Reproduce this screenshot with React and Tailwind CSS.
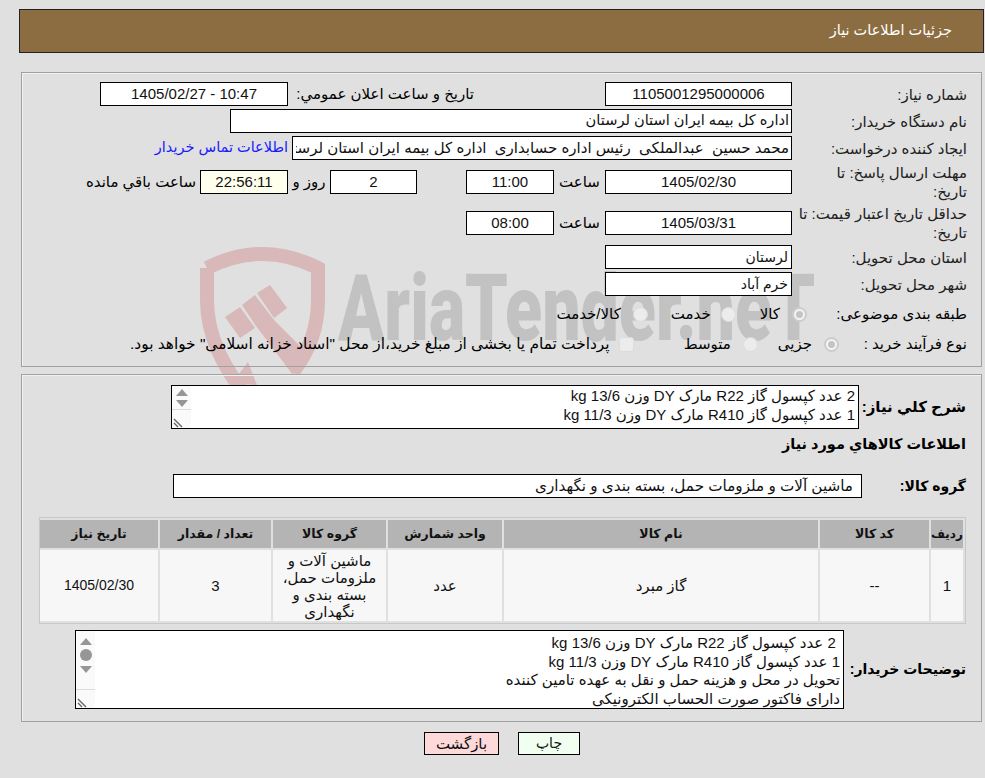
import React from 'react';

const font = "[font-family:'Liberation_Sans','DejaVu_Sans',sans-serif]";

const Box = ({ className = '', children }) => (
  <div className={`h-[24px] border border-black bg-white flex items-center justify-center shrink-0 text-[15px] text-[#111] overflow-hidden whitespace-pre ${className}`}>
    {children}
  </div>
);

const Label = ({ children }) => (
  <div className="w-[175px] shrink-0 text-[15px] leading-[19px] text-[#222]">{children}</div>
);

const Radio = ({ checked, className = '' }) => (
  <span className={`w-[15px] h-[15px] rounded-full flex items-center justify-center shrink-0 ${checked ? 'bg-[#f4f4f4] border-2 border-[#cccccc]' : 'bg-[#ececec] border border-[#dcdcdc]'} ${className}`}>
    {checked && <span className="w-[7px] h-[7px] rounded-full bg-[#c4c4c4]" />}
  </span>
);

const Scroller = ({ thumb }) => (
  <div className="absolute left-0 top-0 bottom-0 w-[19px] bg-[#fafafa] flex flex-col items-center">
    <svg width="12" height="8" viewBox="0 0 12 8" className={thumb ? 'mt-[7px]' : 'mt-[3px]'}><path d="M0 7 L6 0 L12 7 Z" fill="#969696" /></svg>
    {thumb && <span className="w-[12px] h-[12px] rounded-full bg-[#969696] mt-[3px]" />}
    <svg width="12" height="8" viewBox="0 0 12 8" className={thumb ? 'mt-[5px]' : 'mt-[3px]'}><path d="M0 0 L12 0 L6 7 Z" fill="#969696" /></svg>
    <div className="mt-auto w-full h-[19px] border-t border-[#dcdcdc] relative">
      <svg width="10" height="10" viewBox="0 0 10 10" className="absolute left-[1px] bottom-0"><path d="M1 1 L9 9 M1 5 L5 9" stroke="#666" strokeWidth="1.4" fill="none" /></svg>
    </div>
  </div>
);

const columns = [
  { title: 'ردیف', width: 'w-[32px] text-[12px]' },
  { title: 'کد کالا', width: 'w-[109px] text-[12.5px]' },
  { title: 'نام کالا', width: 'w-[314px] text-[12.5px]' },
  { title: 'واحد شمارش', width: 'w-[114px] text-[12.5px]' },
  { title: 'گروه کالا', width: 'w-[113px] text-[12.5px]' },
  { title: 'تعداد / مقدار', width: 'w-[111px] text-[12.5px]' },
  { title: 'تاریخ نیاز', width: 'w-[118px] text-[12.5px]' },
];

const row = ['1', '--', 'گاز مبرد', 'عدد', 'ماشین آلات و ملزومات حمل، بسته بندی و نگهداری', '3', '1405/02/30'];

export default function App() {
  return (
    <div dir="rtl" className={`relative min-h-[778px] w-[985px] overflow-hidden bg-[#e0e0e0] pt-[9px] ${font}`}>
      {/* واترمارک */}
      <div dir="ltr" className="absolute left-[190px] top-[240px] w-[640px] h-[200px]">
        <svg width="160" height="200" viewBox="190 240 160 200" className="absolute left-0 top-0">
          <g fill="none" stroke="#d8b8b8" strokeWidth="14">
            <path d="M207 268 Q262 240 318 268 L318 300 Q318 340 293 372" />
            <path d="M207 268 L207 300 Q207 350 250 400" />
          </g>
          <g fill="#d8b8b8">
            <path d="M225 317 L240 307 L255 328 L240 338 Z" />
            <path d="M242 305 L255 295 L274 320 L306 352 L293 375 L256 326 Z" />
            <path d="M257 293 L270 285 L287 308 L274 318 Z" />
            <path d="M248 362 L257 385 L232 383 Z" />
          </g>
        </svg>
        <span className="absolute left-[148px] top-[19px] origin-left scale-x-[0.74] text-[92px] leading-[100px] font-black text-[#c2c2c2] whitespace-nowrap [font-family:'Roboto',sans-serif]">
          AriaTender.neT
        </span>
      </div>

      <div className="relative z-10">
        {/* هدر */}
        <div className="mr-[1px] ml-[19px] h-[44px] border border-[#222] bg-[#8c6d42] flex items-center pr-[31px] text-[14.5px] text-white">
          جزئیات اطلاعات نیاز
        </div>

        {/* مشخصات نیاز */}
        <div className="mt-[19px] mr-[3px] ml-[21px] h-[295px] border border-[#a0a0a0] shadow-[inset_1px_1px_0_#f2f2f2] pt-[9px] pr-[14px]">
          <div className="flex items-center h-[24px]">
            <Label>شماره نیاز:</Label>
            <Box className="w-[187px]">1105001295000006</Box>
            <div className="mr-[131px] w-[186px] text-[15px] whitespace-nowrap">تاریخ و ساعت اعلان عمومي:</div>
            <Box className="w-[188px]"><span dir="ltr">1405/02/27 - 10:47</span></Box>
          </div>
          <div className="flex items-center h-[24px] mt-[3px]">
            <Label>نام دستگاه خریدار:</Label>
            <Box className="w-[562px] !justify-start pr-[2px] !text-[14.6px]">اداره کل بیمه ایران استان لرستان</Box>
          </div>
          <div className="flex items-center h-[24px] mt-[3px]">
            <Label>ایجاد کننده درخواست:</Label>
            <Box className="w-[500px] !justify-start pr-[2px] pl-[3px]">
              <div className="overflow-hidden">محمد حسین  عبدالملکی  رئیس اداره حسابداری  اداره کل بیمه ایران استان لرستان</div>
            </Box>
            <a href="#" className="mr-[4px] text-[14.5px] text-[#1a1aff] whitespace-nowrap">اطلاعات تماس خریدار</a>
          </div>
          <div className="flex items-center h-[24px] mt-[10px]">
            <Label>مهلت ارسال پاسخ: تا<br />تاریخ:</Label>
            <Box className="w-[187px]">1405/02/30</Box>
            <div className="w-[51px] text-center text-[15px]">ساعت</div>
            <Box className="w-[88px]">11:00</Box>
            <Box className="w-[87px] mr-[49px]">2</Box>
            <div className="w-[42px] text-center text-[15px]">روز و</div>
            <Box className="w-[88px] !bg-[#ffffee]">22:56:11</Box>
            <div className="mr-[4px] text-[15px] whitespace-nowrap">ساعت باقي مانده</div>
          </div>
          <div className="flex items-center h-[24px] mt-[17px]">
            <Label>حداقل تاریخ اعتبار قیمت: تا<br />تاریخ:</Label>
            <Box className="w-[187px]">1405/03/31</Box>
            <div className="w-[51px] text-center text-[15px]">ساعت</div>
            <Box className="w-[88px]">08:00</Box>
          </div>
          <div className="flex items-center h-[24px] mt-[10px]">
            <Label>استان محل تحویل:</Label>
            <Box className="w-[187px] !justify-start pr-[3px] !text-[14px]">لرستان</Box>
          </div>
          <div className="flex items-center h-[24px] mt-[3px]">
            <Label>شهر محل تحویل:</Label>
            <Box className="w-[187px] !justify-start pr-[3px] !text-[14px]">خرم آباد</Box>
          </div>
          <div className="flex items-center h-[24px] mt-[6px] text-[15px]">
            <div className="w-[128px] shrink-0 whitespace-nowrap">طبقه بندی موضوعی:</div>
            <Radio checked className="mr-[32px]" />
            <span className="mr-[12px]">کالا</span>
            <Radio className="mr-[24px]" />
            <span className="mr-[10px]">خدمت</span>
            <Radio className="mr-[23px]" />
            <span className="mr-[12px]">کالا/خدمت</span>
          </div>
          <div className="flex items-center h-[24px] mt-[6px] text-[15px] whitespace-nowrap">
            <div className="w-[128px] shrink-0">نوع فرآیند خرید :</div>
            <Radio checked />
            <span className="mr-[12px]">جزیی</span>
            <Radio className="mr-[20px]" />
            <span className="mr-[12px]">متوسط</span>
            <span className="mr-[50px] w-[15px] h-[15px] rounded-[3px] bg-[#ececec] border border-[#dcdcdc] shrink-0" />
            <span className="mr-[9px] text-[15.4px]">پرداخت تمام یا بخشی از مبلغ خرید،از محل "اسناد خزانه اسلامی" خواهد بود.</span>
          </div>
        </div>

        {/* شرح و کالاها */}
        <div className="mt-[7px] mr-[3px] ml-[21px] h-[348px] border border-[#a0a0a0] shadow-[inset_1px_1px_0_#f2f2f2] pt-[10px] pr-[15px]">
          <div className="flex items-center h-[44px]">
            <div className="w-[107px] shrink-0 text-[15px] font-bold whitespace-nowrap">شرح كلي نياز:</div>
            <div className="relative w-[688px] h-[44px] border border-black bg-white pr-[3px] text-[15px] leading-[19px] text-[#111]">
              <div>2 عدد کپسول گاز R22 مارک DY وزن 13/6 kg</div>
              <div>1 عدد کپسول گاز R410 مارک DY وزن 11/3 kg</div>
              <Scroller />
            </div>
          </div>
          <div className="mt-[5px] h-[20px] text-[14.5px] font-bold leading-[20px]">اطلاعات كالاهاي مورد نياز</div>
          <div className="mt-[20px] flex items-center h-[24px]">
            <div className="w-[104px] shrink-0 text-[14px] font-bold whitespace-nowrap">گروه كالا:</div>
            <Box className="w-[689px] !justify-start pr-[8px] !text-[15.2px]">ماشین آلات و ملزومات حمل، بسته بندی و نگهداری</Box>
          </div>

          <div className="mt-[19px] w-[927px] border border-[#c8c8c8]">
            <table className="w-full table-fixed border-separate border-spacing-[2px]">
              <thead>
                <tr>
                  {columns.map((col) => (
                    <th key={col.title} className={`${col.width} h-[28px] p-0 bg-[#b4b4b4] font-bold text-[#111] text-center whitespace-nowrap`}>
                      {col.title}
                    </th>
                  ))}
                </tr>
              </thead>
              <tbody>
                <tr>
                  {row.map((cell, i) => (
                    <td key={i} className={`h-[71px] px-[4px] py-0 bg-[#f7f7f7] leading-[17px] text-[#111] text-center ${i === 6 ? 'text-[14px]' : 'text-[15px]'}`}>
                      {cell}
                    </td>
                  ))}
                </tr>
              </tbody>
            </table>
          </div>

          <div className="mt-[6px] flex items-center h-[79px]">
            <div className="w-[122px] shrink-0 text-[14px] font-bold whitespace-nowrap">توضیحات خریدار:</div>
            <div className="relative w-[769px] h-[79px] border border-black bg-white pr-[3px] pt-[3px] text-[15px] leading-[18.5px] text-[#111]">
              <div>&nbsp;2 عدد کپسول گاز R22 مارک DY وزن 13/6 kg</div>
              <div>1 عدد کپسول گاز R410 مارک DY وزن 11/3 kg</div>
              <div>تحویل در محل و هزینه حمل و نقل به عهده تامین کننده</div>
              <div>دارای فاکتور صورت الحساب الکترونیکی</div>
              <Scroller thumb />
            </div>
          </div>
        </div>

        {/* دکمه ها */}
        <div className="mt-[10px] flex justify-center gap-[19px] pl-[19px]">
          <button className="w-[62px] h-[23px] border border-black bg-[#f0fff0] text-[14px] text-[#111]">چاپ</button>
          <button className="w-[75px] h-[23px] border border-black bg-[#ffd9d9] text-[15px] text-[#111]">بازگشت</button>
        </div>
      </div>
    </div>
  );
}
